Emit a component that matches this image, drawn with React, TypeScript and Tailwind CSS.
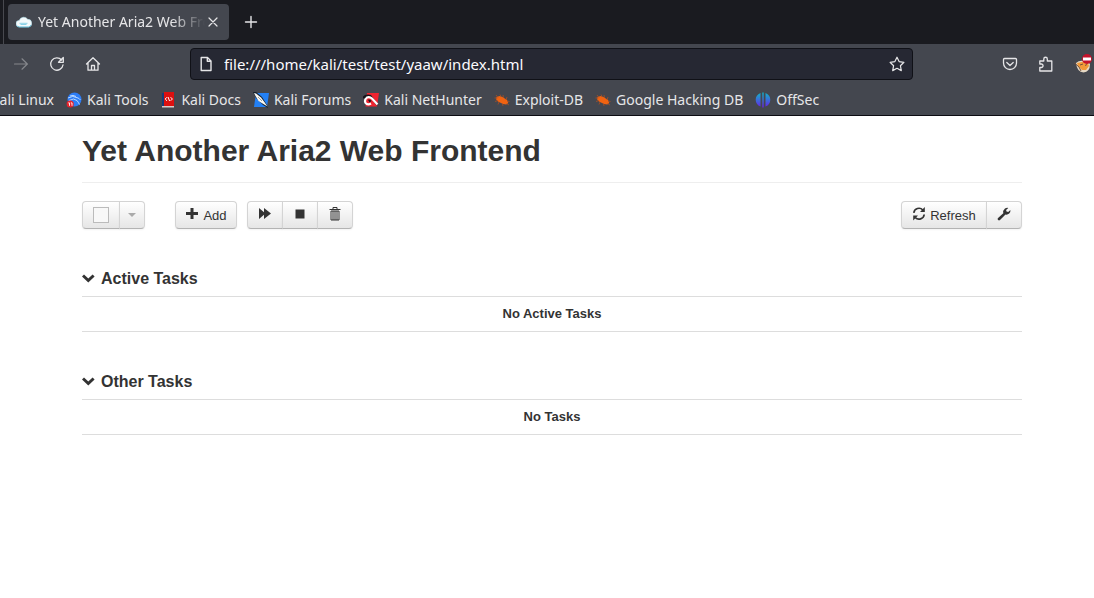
import type { ReactNode } from 'react';

const button =
  'flex h-7 items-center justify-center border border-[#d4d4d4] border-b-[#b3b3b3] bg-linear-to-b from-white to-[#e6e6e6] text-[13px] leading-5 shadow-[0_1px_2px_rgba(0,0,0,0.05)]';

function CloudIcon() {
  return (
    <svg width="16" height="16" viewBox="0 0 16 16" aria-hidden="true">
      <path d="M3.500 13a3.300 3.300 0 0 1-.3-6.600A4.800 4.800 0 0 1 11.700 5.300a3.900 3.900 0 0 1 1 7.700Z" fill="#f4fafc" stroke="#b5e0ec" strokeWidth=".6" />
      <path d="M3.500 9.300h8M4.500 10.500h6" stroke="#7fcde4" strokeWidth=".9" />
      <path d="M.8 11.500q.8 1.500 2.700 1.500h9q2 0 2.500-2" fill="none" stroke="#50b6d4" strokeWidth=".8" />
    </svg>
  );
}

function ToolsIcon() {
  return (
    <svg width="16" height="16" viewBox="0 0 16 16" aria-hidden="true">
      <circle cx="8.500" cy="7.500" r="7" fill="#2d7df6" />
      <path d="M2 6q5-3 9-.3 2 .2 3.500 2.300M3 8.500q5-3 8 0 1.500 2 2.500 4M4 4q3-1.500 6 .5" fill="none" stroke="#c9e2ff" strokeWidth=".9" />
      <circle cx="4.200" cy="12" r="3.600" fill="#e6222b" />
      <path d="M2.300 10.900h1.200v2.900M4.800 10.900H6v2.900" fill="none" stroke="#fff" strokeWidth=".9" />
    </svg>
  );
}

function DocsIcon() {
  return (
    <svg width="16" height="16" viewBox="0 0 16 16" aria-hidden="true">
      <path d="M2 1h2v13H2Z" fill="#163c79" />
      <path d="M4 0h10v14H4Z" fill="#dc1010" />
      <path d="M2 14h12v1.500H2Z" fill="#d9caca" />
      <path d="M7 5.200 5.200 7 7 8.800M10.600 5.200 12.400 7l-1.800 1.800M8 5l1.600 4" fill="none" stroke="#fff" strokeWidth="1" />
    </svg>
  );
}

function ForumsIcon() {
  return (
    <svg width="16" height="16" viewBox="0 0 16 16" aria-hidden="true">
      <path d="M3 1h13l-2 14H1Z" fill="#2380f5" />
      <path d="M0 0h3l6 5 5 8 1 3-5-3-7-7Z" fill="#15202c" />
      <path d="m1 1 2 .5 5 4 3 4 3.500 5-5-3-4-2.500L2.500 4Z" fill="#f8f8f4" />
      <path d="m5 5 4 4" stroke="#5a6269" strokeWidth=".6" />
    </svg>
  );
}

function NetHunterIcon() {
  return (
    <svg width="16" height="16" viewBox="0 0 16 16" aria-hidden="true">
      <path d="M4 1h12l-2 13.500H2.500Z" fill="#ef2430" />
      <path d="M0 4.500 2 3l3-.5 3 .5 7 9.500-1.500 1-6-8-4 .5L0 6.500Z" fill="#171319" />
      <path d="m14.500 12.500-5.500-6Q6.500 4.200 4 5.500 1 8 2.500 10.800 4.500 13.500 8 11.500" fill="none" stroke="#fff" strokeWidth="2.200" />
      <path d="M5 7.800q2-1 3.500 1.200L6.500 10.500Z" fill="#171319" />
    </svg>
  );
}

function BugIcon() {
  return (
    <svg width="16" height="16" viewBox="0 0 16 16" aria-hidden="true">
      <path d="m2.500 5 3-1 3 1 4.500 3 1.300 3-2 1.500-3.300-.5L4 9.500 2.200 7.500Z" fill="#f06311" />
      <path d="M.5 6h3M2 3l2 2.500M6 2.500l1 2M9 3l.5 3M13 5l-1 3M15.500 9.500 13 9M15 13l-2.500-1.500M9 14l-.5-2.500M4 12.500 5 10M1 9.500l3-1" stroke="#b8501f" strokeWidth=".7" />
    </svg>
  );
}

function OffSecIcon() {
  return (
    <svg width="16" height="16" viewBox="0 0 16 16" aria-hidden="true">
      <defs>
        <linearGradient id="offsec" x1="0" y1="0" x2="0" y2="1">
          <stop offset="0" stopColor="#0fb7c9" />
          <stop offset="1" stopColor="#6721e8" />
        </linearGradient>
      </defs>
      <path d="M5.500 1v13.500Q.7 12.500.7 7.700.7 3 5.500 1ZM10.500 1v13.500q4.800-2 4.800-6.800 0-4.700-4.800-6.700ZM7.300.5h1.400v15H7.300Z" fill="url(#offsec)" />
    </svg>
  );
}

const bookmarks: { label: string; icon: ReactNode }[] = [
  { label: 'Kali Tools', icon: <ToolsIcon /> },
  { label: 'Kali Docs', icon: <DocsIcon /> },
  { label: 'Kali Forums', icon: <ForumsIcon /> },
  { label: 'Kali NetHunter', icon: <NetHunterIcon /> },
  { label: 'Exploit-DB', icon: <BugIcon /> },
  { label: 'Google Hacking DB', icon: <BugIcon /> },
  { label: 'OffSec', icon: <OffSecIcon /> },
];

function Line({ d, width = '1.4' }: { d: string; width?: string }) {
  return (
    <svg width="16" height="16" viewBox="0 0 16 16" fill="none" stroke="currentColor" strokeWidth={width} strokeLinecap="round" strokeLinejoin="round" aria-hidden="true">
      <path d={d} />
    </svg>
  );
}

function Solid({ d }: { d: string }) {
  return (
    <svg width="14" height="14" viewBox="0 0 14 14" fill="#333" className="mb-0.5" aria-hidden="true">
      <path d={d} />
    </svg>
  );
}

function ExtensionIcon() {
  return (
    <svg width="20" height="20" viewBox="0 0 20 20" aria-hidden="true">
      <path d="M2 9q4-4 12-1l2 2q0 8-6.500 8.500Q3 18 2 9Z" fill="#e7d9c4" />
      <path d="m3 9 10-2 2 5-3 4H8l-4-4Z" fill="#f29a38" />
      <path d="m.5 9 4.500 4 2 4M6 11l3-1M11 11.500l2-1" fill="none" stroke="#75513d" strokeWidth="1" />
      <circle cx="13" cy="5" r="5" fill="#c5132c" />
      <path d="M9 3.500h8v3H9Z" fill="#fff" />
    </svg>
  );
}

function BrowserChrome() {
  return (
    <header className="font-['Noto_Sans',sans-serif] text-[14px] leading-5 text-[#e6e6e8]">
      <div className="flex h-11 items-center bg-[#1a1b20]">
        <div className="mr-1 h-full w-1 border-r border-[#48494f]" />
        <div className="flex h-9 w-[221px] items-center rounded bg-[#44474f] pr-2 pl-2">
          <CloudIcon />
          <span className="ml-1.5 min-w-0 flex-1 overflow-hidden whitespace-nowrap mask-r-from-80% mask-r-to-100%">
            Yet Another Aria2 Web Frontend
          </span>
          <button aria-label="Close tab"><Line d="m4 4 8 8M12 4l-8 8" width="1.2" /></button>
        </div>
        <button aria-label="New tab" className="ml-3.5"><Line d="M8 2.500v11M2.500 8h11" /></button>
      </div>
      <div className="flex h-10 items-center bg-[#44474f] pl-3">
        <button aria-label="Forward" className="ml-px text-[#85878c]"><Line d="M1.500 8h13M9 2.800 14.300 8 9 13.200" width="1.200" /></button>
        <button aria-label="Reload" className="ml-5">
          <Line d="M14 9A6.200 6.200 0 1 1 12.600 4M14.300 1.500v4.800H9.500Z" width="1.300" />
        </button>
        <button aria-label="Home" className="ml-5"><Line d="M1.500 8 8 1.800 14.500 8M3 7v7.200h10V7M6.500 14V9.500h3V14" width="1.300" /></button>
        <div className="ml-[89px] flex h-8 min-w-0 flex-1 items-center rounded border border-[#101117] bg-[#262833] pr-[7px] pl-[7px]">
          <Line d="M3.200 1.500h6.300L13 5v9.500H3.200ZM9.300 1.800v3.500h3.500" />
          <input aria-label="Address" defaultValue="file:///home/kali/test/test/yaaw/index.html" className="ml-2.5 min-w-0 flex-1 bg-transparent text-[15px] text-[#fbfbfe] outline-none" />
          <button aria-label="Bookmark this page"><Line d="m8 1.200 2.100 4.400 4.800.7-3.500 3.400.9 4.900L8 12.300l-4.300 2.300.9-4.900L1.100 6.300l4.800-.7Z" width="1.200" /></button>
        </div>
        <div className="ml-[89px] flex h-full items-center gap-5">
          <button aria-label="Save to Pocket"><Line d="M2.500 2.500h11q1 0 1 1V7a6.500 6.500 0 0 1-13 0V3.500q0-1 1-1ZM4.800 6.500 8 9.500l3.200-3" width="1.300" /></button>
          <button aria-label="Extensions"><Line d="M1.800 5h4V3a1.700 1.700 0 0 1 3.500 0v2h4.500v10h-12v-3.500h1.500a1.700 1.700 0 0 0 0-3.500H1.800Z" width="1.300" /></button>
          <button aria-label="Content blocker" className="h-6"><ExtensionIcon /></button>
        </div>
      </div>
      <nav aria-label="Bookmarks" className="flex h-8 items-center gap-3 overflow-hidden border-b border-[#0c0c12] bg-[#44474f] whitespace-nowrap">
        <div className="flex w-[54px] justify-end"><a href="#kali-linux">Kali Linux</a></div>
        {bookmarks.map(({ label, icon }) => (
          <a key={label} href={'#' + label} className="flex items-center gap-[5px]">{icon}{label}</a>
        ))}
      </nav>
    </header>
  );
}

function TaskSection({ title, empty }: { title: string; empty: string }) {
  return (
    <section className="mt-10">
      <h2 className="flex h-5 items-center gap-[5px] text-[16px] leading-5 font-bold">
        <Solid d="m0 5.500 2-2 4.300 4 4.300-4 2 2L6.300 11.500Z" />
        {title}
      </h2>
      <table className="mt-[7px] w-full border-y border-[#ddd]">
        <tbody>
          <tr><td className="h-[35px] text-center text-[13px] font-bold">{empty}</td></tr>
        </tbody>
      </table>
    </section>
  );
}

export default function App() {
  return (
    <div className="min-h-screen bg-white text-[#333]">
      <BrowserChrome />
      <main className="pr-[72px] pl-[82px] font-['Liberation_Sans',Arial,sans-serif]">
        <h1 className="border-b border-[#eee] pt-4 pb-3 text-[30px] leading-[38px] font-bold">
          Yet Another Aria2 Web Frontend
        </h1>
        <div className="mt-[18px] flex items-center">
          <label className={button + ' w-[38px] rounded-l'}>
            <input type="checkbox" aria-label="Select all tasks" disabled className="size-4 appearance-none border border-[#bbb] bg-[#f8f8f8]" />
          </label>
          <button aria-label="Selection options" className={button + ' -ml-px w-[26px] rounded-r'}>
            <svg width="8" height="4" viewBox="0 0 8 4" aria-hidden="true"><path d="M0 0h8L4 4Z" fill="#aaa" /></svg>
          </button>
          <button className={button + ' ml-[30px] w-[62px] gap-1 rounded'}>
            <Solid d="M5.500 1h3v4H13v3H8.500v4h-3V8H1V5h4.500Z" /><span className="pt-px">Add</span>
          </button>
          <button aria-label="Start" className={button + ' ml-2.5 w-9 rounded-l'}><Solid d="M1 1l5 4.200V1l7 5.500L6 12V7.800L1 12Z" /></button>
          <button aria-label="Stop" className={button + ' -ml-px w-9'}><Solid d="M2.500 2.500h9v9h-9Z" /></button>
          <button aria-label="Remove" className={button + ' -ml-px w-9 rounded-r'}>
            <svg width="14" height="14" viewBox="0 0 14 14" fill="none" stroke="#333" className="mb-0.5" aria-hidden="true">
              <path d="M1.500 2.500h11M5 2V.5h4V2M3 4v9h8V4ZM5 4v9M7 4v9M9 4v9" />
            </svg>
          </button>
          <button className={button + ' ml-auto w-[86px] gap-1 rounded-l'}>
            <svg width="14" height="14" viewBox="0 0 14 14" className="mb-0.5" aria-hidden="true">
              <path d="M1.800 5.800A5.200 5.200 0 0 1 10.800 3M12.200 7.500a5.200 5.200 0 0 1-9 3" fill="none" stroke="#333" strokeWidth="1.700" />
              <path d="M12.800 0v5H8ZM1.200 13.500v-5H6Z" fill="#333" />
            </svg>
            <span className="pt-px">Refresh</span>
          </button>
          <button aria-label="Settings" className={button + ' -ml-px w-9 rounded-r'}>
            <Solid d="m.8 11.300 5.500-5.100Q5.700 3.300 8 1.500 9.500.5 11.300.9L9.100 3l.4 1.600 1.700.4 2.200-2q.3 2-1.200 3.600-1.700 1.500-3.700 1L3 13.100q-1.100.7-1.900-.1-.8-.7-.3-1.700Z" />
          </button>
        </div>
        <TaskSection title="Active Tasks" empty="No Active Tasks" />
        <TaskSection title="Other Tasks" empty="No Tasks" />
      </main>
    </div>
  );
}
